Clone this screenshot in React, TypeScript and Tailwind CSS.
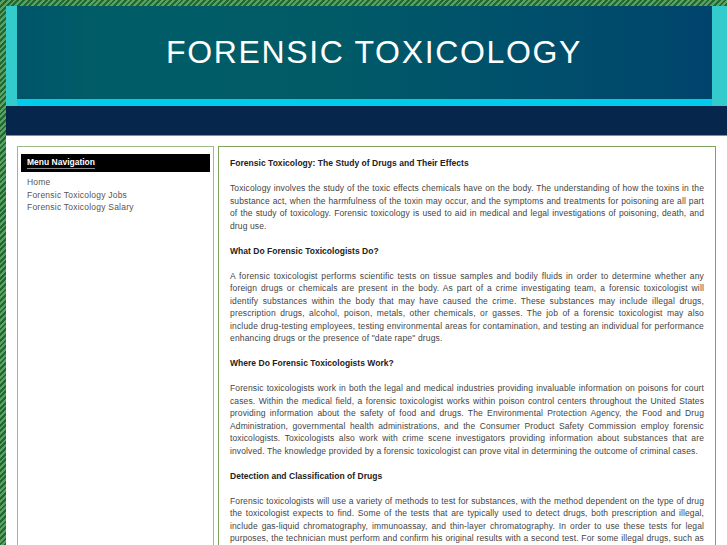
import React from "react";

const font = { fontFamily: '"Liberation Sans", Arial, Helvetica, sans-serif' };

export default function App() {
  return (
    <div
      className="min-h-screen w-full pl-[6px] pt-[6px] overflow-hidden bg-[repeating-linear-gradient(135deg,#1d6a33_0px,#1d6a33_2px,#5e9f62_2px,#5e9f62_4px)]"
      style={font}
    >
      <div className="bg-white min-h-[539px]">
        {/* Header */}
        <div className="flex h-[100px]">
          <div className="w-[11px] bg-[#33cbcb]" />
          <div className="flex-1 flex flex-col">
            <div className="h-[93px] bg-[linear-gradient(90deg,#00556a_0%,#005d67_12%,#005b67_45%,#00516b_70%,#00446d_100%)] pt-[30px] pl-[149px]">
              <div className="text-white text-[32px] leading-[32px] tracking-[1.65px]" style={font}>
                FORENSIC TOXICOLOGY
              </div>
            </div>
            <div className="h-[7px] bg-[#00ccec]" />
          </div>
          <div className="w-[15px] bg-[#33cbcb]" />
        </div>
        <div className="h-[29px] bg-[#07264c]" />
        <div className="h-px bg-[#7d8ea2]" />

        {/* Body */}
        <div className="flex gap-[4px] px-[11px] pt-[10px]">
          <div className="w-[197px] shrink-0 border border-[#9dbb86] px-[3px] pt-[7px] min-h-[420px]">
            <div className="h-[18px] bg-black pl-[6px] flex items-center">
              <span className="text-white font-bold text-[8.5px] leading-[10px] border-b border-[#8a8a8a] pb-[1px]">
                Menu Navigation
              </span>
            </div>
            <ul className="pl-[6px] pt-[4px] text-[8.5px] leading-[12.5px] tracking-[0.22px] text-[#555]">
              <li>Home</li>
              <li>Forensic Toxicology Jobs</li>
              <li>Forensic Toxicology Salary</li>
            </ul>
          </div>
          <div className="flex-1 border border-[#7ea460] px-[11px] pt-[10px] text-[8.5px] leading-[12.5px] text-[#444] text-justify">
            <h1 className="font-bold text-[#222] mb-[12.5px] tracking-[0.03px]">
              Forensic Toxicology: The Study of Drugs and Their Effects
            </h1>
            <p className="mb-[12.5px] tracking-[0.12px]">
              Toxicology involves the study of the toxic effects chemicals have on the body. The understanding of how the toxins in the substance act, when the harmfulness of the toxin may occur, and the symptoms and treatments for poisoning are all part of the study of toxicology. Forensic toxicology is used to aid in medical and legal investigations of poisoning, death, and drug use.
            </p>
            <h2 className="font-bold text-[#222] mb-[12.5px] tracking-[0.03px]">What Do Forensic Toxicologists Do?</h2>
            <p className="mb-[12.5px] tracking-[0.16px]">
              A forensic toxicologist performs scientific tests on tissue samples and bodily fluids in order to determine whether any foreign drugs or chemicals are present in the body. As part of a crime investigating team, a forensic toxicologist will identify substances within the body that may have caused the crime. These substances may include illegal drugs, prescription drugs, alcohol, poison, metals, other chemicals, or gasses. The job of a forensic toxicologist may also include drug-testing employees, testing environmental areas for contamination, and testing an individual for performance enhancing drugs or the presence of "date rape" drugs.
            </p>
            <h2 className="font-bold text-[#222] mb-[12.5px] tracking-[0.03px]">Where Do Forensic Toxicologists Work?</h2>
            <p className="mb-[12.5px] tracking-[0.12px]">
              Forensic toxicologists work in both the legal and medical industries providing invaluable information on poisons for court cases. Within the medical field, a forensic toxicologist works within poison control centers throughout the United States providing information about the safety of food and drugs. The Environmental Protection Agency, the Food and Drug Administration, governmental health administrations, and the Consumer Product Safety Commission employ forensic toxicologists. Toxicologists also work with crime scene investigators providing information about substances that are involved. The knowledge provided by a forensic toxicologist can prove vital in determining the outcome of criminal cases.
            </p>
            <h2 className="font-bold text-[#222] mb-[12.5px] tracking-[0.03px]">Detection and Classification of Drugs</h2>
            <p className="mb-[12.5px] tracking-[0.12px]">
              Forensic toxicologists will use a variety of methods to test for substances, with the method dependent on the type of drug the toxicologist expects to find. Some of the tests that are typically used to detect drugs, both prescription and illegal, include gas-liquid chromatography, immunoassay, and thin-layer chromatography. In order to use these tests for legal purposes, the technician must perform and confirm his original results with a second test. For some illegal drugs, such as marijuana and cocaine, a more specific test such as gas chromatography-mass spectrometry is required to confirm the original result.
            </p>
          </div>
        </div>
      </div>
    </div>
  );
}
